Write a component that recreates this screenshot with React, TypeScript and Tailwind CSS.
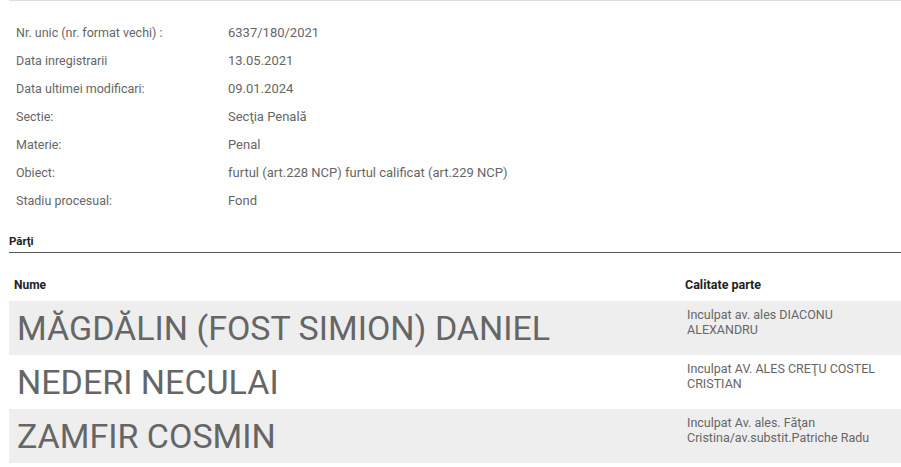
const info: [string, string][] = [
  ['Nr. unic (nr. format vechi) :', '6337/180/2021'],
  ['Data inregistrarii', '13.05.2021'],
  ['Data ultimei modificari:', '09.01.2024'],
  ['Sectie:', 'Secţia Penală'],
  ['Materie:', 'Penal'],
  ['Obiect:', 'furtul (art.228 NCP) furtul calificat (art.229 NCP)'],
  ['Stadiu procesual:', 'Fond'],
]

const parti: { nume: string; calitate: string }[] = [
  { nume: 'MĂGDĂLIN (FOST SIMION) DANIEL', calitate: 'Inculpat av. ales DIACONU ALEXANDRU' },
  { nume: 'NEDERI NECULAI', calitate: 'Inculpat AV. ALES CREŢU COSTEL CRISTIAN' },
  { nume: 'ZAMFIR COSMIN', calitate: 'Inculpat Av. ales. Făţan Cristina/av.substit.Patriche Radu' },
]

export default function App() {
  return (
    <div className="min-h-screen bg-white font-['Roboto',sans-serif] text-[#666]">
      <div className="ml-[9px] border-t border-[#ddd]" />

      {/* Detalii dosar */}
      <div className="pl-4 pt-[18px]">
        {info.map(([label, value]) => (
          <div key={label} className="flex h-7 items-center">
            <div className="w-[212px] text-[12.5px]">{label}</div>
            <div className="text-[13px]">{value}</div>
          </div>
        ))}
      </div>

      {/* Parti */}
      <div className="ml-[9px] mt-[18px]">
        <h2 className="border-b border-[#555] pb-[3px] text-[11.5px] leading-[16px] font-bold text-[#222]">Părţi</h2>

        <table className="mt-[23px] w-full border-collapse">
          <thead>
            <tr className="text-left text-[12px] leading-[18px] font-bold text-[#222]">
              <th className="px-[5px] pb-[7px]">Nume</th>
              <th className="w-[218px] px-[2px] pb-[7px] text-[12.5px]">Calitate parte</th>
            </tr>
          </thead>
          <tbody>
            {parti.map((p, i) => (
              <tr key={p.nume} className={i % 2 === 0 ? 'bg-[#eee]' : 'bg-white'}>
                <td className="h-[54px] px-2 align-middle text-[34px] leading-[38px] whitespace-nowrap">{p.nume}</td>
                <td className="px-[4px] pt-[6px] pb-[8px] align-top text-[12.5px] leading-[15px]">{p.calitate}</td>
              </tr>
            ))}
          </tbody>
        </table>
      </div>
    </div>
  )
}
